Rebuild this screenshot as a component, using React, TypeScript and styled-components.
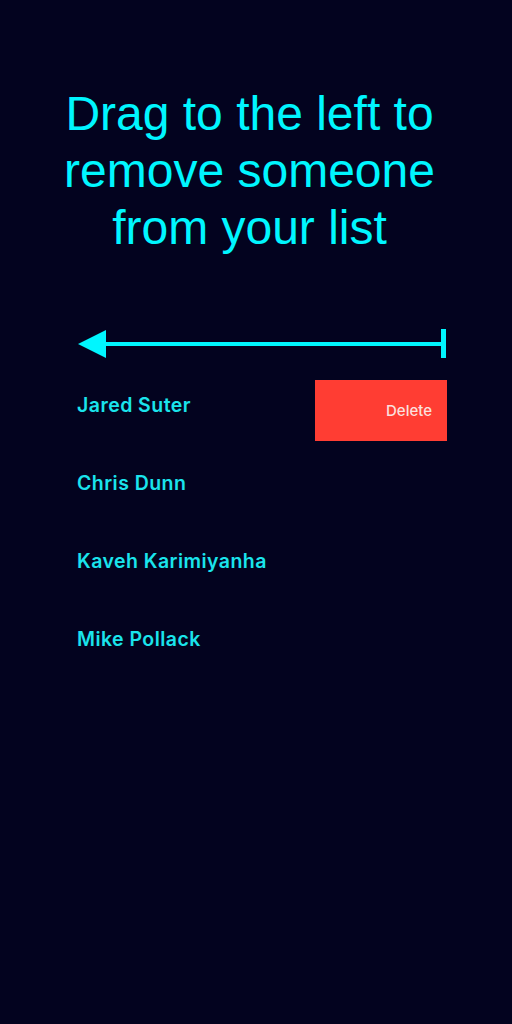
import React from "react";
import styled, { createGlobalStyle } from "styled-components";

const Global = createGlobalStyle`
  html, body { margin: 0; padding: 0; background: #03031f; }
  #root { min-height: 1024px; }
`;

const Page = styled.div`
  width: 512px;
  min-height: 1024px;
  background: #03031f;
  display: flex;
  flex-direction: column;
`;

const Title = styled.h1`
  margin: 0;
  padding: 85px 13px 0 0;
  font-family: "Liberation Sans", Arial, sans-serif;
  font-weight: 400;
  font-size: 48px;
  line-height: 57px;
  color: #00f6ff;
  text-align: center;
`;

const ArrowWrap = styled.div`
  margin-top: 73px;
  padding-left: 78px;
  height: 30px;
  display: flex;
`;

const List = styled.ul`
  list-style: none;
  margin: 7px 0 0;
  padding: 0;
  display: flex;
  flex-direction: column;
`;

const Row = styled.li`
  height: 78px;
  padding: 0 65px 0 77px;
  display: flex;
  align-items: center;
  justify-content: space-between;
`;

const Name = styled.span`
  font-family: Inter, "Noto Sans", sans-serif;
  font-weight: 600;
  font-size: 19.5px;
  color: #1ae4ec;
  letter-spacing: 0.45px;
`;

const DeleteAction = styled.div`
  width: 132px;
  height: 61px;
  margin-top: 11px;
  background: #ff3d33;
  display: flex;
  align-items: center;
  justify-content: flex-end;
  padding-right: 15px;
  box-sizing: border-box;
  font-family: Inter, "Noto Sans", sans-serif;
  font-weight: 500;
  font-size: 15px;
  color: #fbe0de;
`;

const Arrow = () => (
  <svg width="368" height="30" viewBox="0 0 368 30">
    <polygon points="0,15 28,1 28,29" fill="#00f6ff" />
    <rect x="20" y="13" width="345" height="4" fill="#00f6ff" />
    <rect x="363" y="0" width="5" height="29" fill="#00f6ff" />
  </svg>
);

const people = ["Jared Suter", "Chris Dunn", "Kaveh Karimiyanha", "Mike Pollack"];

export default function App() {
  return (
    <Page>
      <Global />
      <Title>
        Drag to the left to
        <br />
        remove someone
        <br />
        from your list
      </Title>
      <ArrowWrap>
        <Arrow />
      </ArrowWrap>
      <List>
        {people.map((p, i) => (
          <Row key={p}>
            <Name>{p}</Name>
            {i === 0 && <DeleteAction>Delete</DeleteAction>}
          </Row>
        ))}
      </List>
    </Page>
  );
}
